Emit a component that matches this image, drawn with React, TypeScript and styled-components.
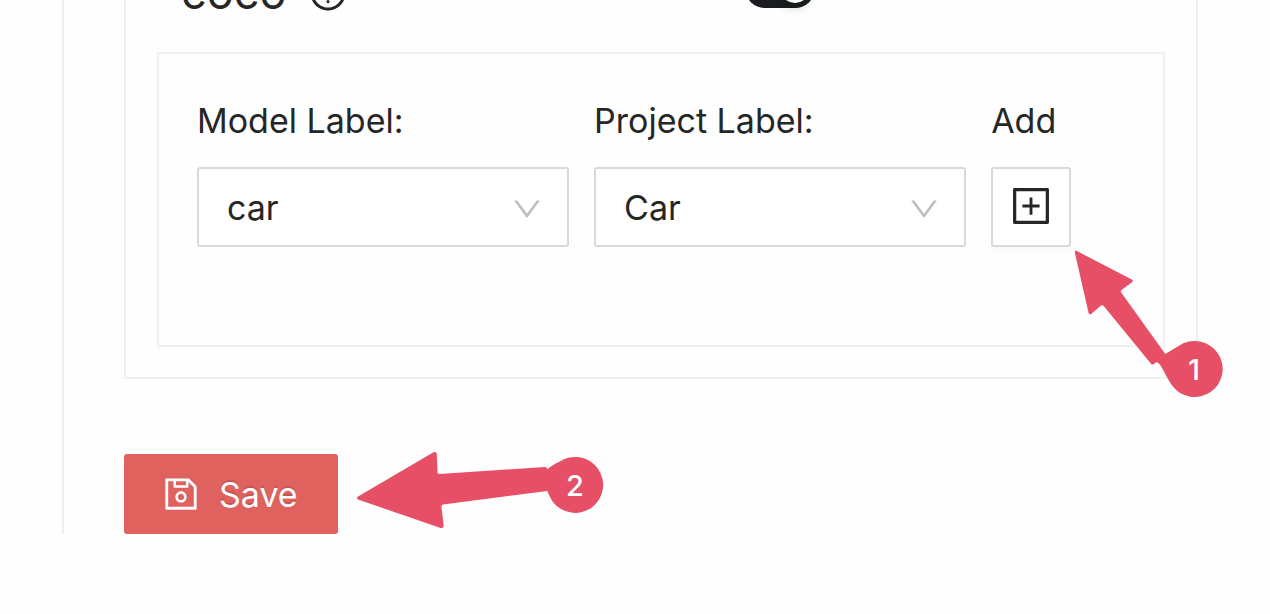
import React, { useState } from "react";
import styled, { createGlobalStyle } from "styled-components";
import {
  AiOutlineDown,
  AiOutlinePlusSquare,
  AiOutlineQuestionCircle,
  AiOutlineSave,
} from "react-icons/ai";

const color = {
  text: "#262626",
  line: "#f0f0f0",
  control: "#d9d9d9",
  chevron: "#bfbfbf",
  dark: "#1a1c1f",
  primary: "#df625f",
  marker: "#e64f66",
};

const GlobalStyle = createGlobalStyle`
  *, *::before, *::after { box-sizing: border-box; }
  body {
    margin: 0;
    background: #fefefe;
    color: ${color.text};
    font-family: Inter, "Liberation Sans", sans-serif;
    font-size: 34px;
  }
`;

const Page = styled.main`
  overflow: hidden;
  padding-left: 62px;
  padding-bottom: 80px;
`;

/* The form is scrolled so that its upper part is above the window. */
const Section = styled.form`
  margin-top: -124px;
  padding: 60px 72px 0 60px;
  border-left: 2px solid ${color.line};
`;

const ModelCard = styled.section`
  padding: 30px 31px;
  border: 2px solid ${color.line};
  border-radius: 2px;
`;

const ModelHeader = styled.header`
  display: grid;
  grid-template-columns: 47fr 33fr;
  align-items: start;
  padding: 0 24px;
  margin-bottom: 34px;
`;

const ModelName = styled.div`
  display: flex;
  align-items: center;
  gap: 22px;
  font-size: 45px;
  line-height: 50px;

  svg {
    width: 40px;
    height: 40px;
  }
`;

const Switch = styled.input`
  appearance: none;
  width: 70px;
  height: 40px;
  margin: 0;
  padding: 5px;
  border-radius: 20px;
  background: ${color.control};
  display: flex;
  justify-content: flex-start;
  cursor: pointer;

  &::after {
    content: "";
    width: 30px;
    height: 30px;
    border-radius: 50%;
    background: #fff;
    box-shadow: 0 5px 10px rgba(0, 35, 11, 0.2);
  }

  &:checked {
    background: ${color.dark};
    justify-content: flex-end;
  }
`;

const MappingBox = styled.div`
  display: grid;
  grid-template-columns: repeat(24, 1fr);
  column-gap: 25px;
  padding: 40px 38px 98px;
  border: 2px solid ${color.line};
`;

const Field = styled.div<{ $span: number }>`
  grid-column: span ${(p) => p.$span};
  display: flex;
  flex-direction: column;
  gap: 19px;
`;

const FieldLabel = styled.label`
  line-height: 54px;
  white-space: nowrap;
`;

const SelectWrap = styled.div`
  display: grid;
  align-items: center;

  > * {
    grid-area: 1 / 1;
  }

  svg {
    justify-self: end;
    width: 34px;
    height: 34px;
    margin-right: 25px;
    margin-top: 4px;
    color: ${color.chevron};
    pointer-events: none;
  }
`;

const SelectControl = styled.select`
  appearance: none;
  width: 100%;
  height: 80px;
  padding: 0 72px 0 28px;
  border: 2px solid ${color.control};
  border-radius: 3px;
  background: #fff;
  color: inherit;
  font: inherit;
`;

const Anchor = styled.div`
  position: relative;
  width: max-content;
`;

const AddButton = styled.button`
  display: flex;
  align-items: center;
  justify-content: center;
  width: 80px;
  height: 80px;
  padding: 0 0 2px;
  border: 2px solid ${color.control};
  border-radius: 3px;
  background: #fff;
  color: inherit;
  box-shadow: 0 5px 0 rgba(0, 0, 0, 0.015);
  cursor: pointer;

  svg {
    width: 46px;
    height: 46px;
  }
`;

const Actions = styled.div`
  margin-top: 75px;
`;

const SaveButton = styled.button`
  display: flex;
  align-items: center;
  gap: 18px;
  height: 80px;
  padding: 0 40px 0 37px;
  border: 0;
  border-radius: 3px;
  background: ${color.primary};
  color: #fff;
  font: inherit;
  text-shadow: 0 -2px 0 rgba(0, 0, 0, 0.12);
  cursor: pointer;

  svg {
    width: 40px;
    height: 40px;
  }
`;

const Marker = styled.svg<{ $top: string }>`
  position: absolute;
  left: 100%;
  top: ${(p) => p.$top};
  fill: ${color.marker};
  pointer-events: none;

  text {
    fill: #fff;
    font-size: 29px;
    font-weight: 500;
    text-anchor: middle;
  }
`;

function SelectField({ id, label, options }: { id: string; label: string; options: string[] }) {
  return (
    <Field $span={10}>
      <FieldLabel htmlFor={id}>{label}</FieldLabel>
      <SelectWrap>
        <SelectControl id={id}>
          {options.map((o) => (
            <option key={o}>{o}</option>
          ))}
        </SelectControl>
        <AiOutlineDown aria-hidden />
      </SelectWrap>
    </Field>
  );
}

export default function App() {
  const [enabled, setEnabled] = useState(true);

  return (
    <>
      <GlobalStyle />
      <Page>
        <Section onSubmit={(e) => e.preventDefault()}>
          <ModelCard>
            <ModelHeader>
              <ModelName>
                <label htmlFor="model-enabled">coco</label>
                <AiOutlineQuestionCircle aria-hidden />
              </ModelName>
              <Switch
                id="model-enabled"
                type="checkbox"
                role="switch"
                checked={enabled}
                onChange={(e) => setEnabled(e.target.checked)}
              />
            </ModelHeader>
            <MappingBox>
              <SelectField id="model-label" label="Model Label:" options={["car"]} />
              <SelectField id="project-label" label="Project Label:" options={["Car"]} />
              <Field $span={4}>
                <FieldLabel htmlFor="add-mapping">Add</FieldLabel>
                <Anchor>
                  <AddButton id="add-mapping" type="button">
                    <AiOutlinePlusSquare aria-hidden />
                  </AddButton>
                  <Marker $top="100%" width="160" height="160" viewBox="0 0 160 160">
                    <path d="M3.8 5.5Q3.6 3.2 6 4.1L60.8 32.6Q62.8 34 61 35.3L50.5 43Q49.3 44.2 50.2 45.6L94.3 107L108 98.8A28 28 0 1 1 101.1 138.6C96 131.5 93.5 124.5 89.7 118.7Q87.6 115.5 85.7 115L82.5 117.3Q81.3 118 80.2 116.9L32.5 58.8Q31.3 57.6 30 58.6L20.2 67Q18.2 68.2 17.6 66Z" />
                    <text x="123" y="133">1</text>
                  </Marker>
                </Anchor>
              </Field>
            </MappingBox>
          </ModelCard>
          <Actions>
            <Anchor>
              <SaveButton type="submit">
                <AiOutlineSave aria-hidden />
                Save
              </SaveButton>
              <Marker $top="-10px" width="270" height="100" viewBox="0 0 270 100">
                <path d="M19.6 52.7L95.5 8.3Q98.5 7 98.8 10L99.5 28.6Q99.7 30.2 101.3 30L207 22.9Q208.7 22.9 209.3 25.3C213.500 22.5 217 19.4 221.3 17.800A28 28 0 1 1 214.9 57.9C212.3 54 210.8 50.5 209.3 47L105 60.6Q103.2 61 103.4 62.8L105.7 81.5Q105.7 84.8 102.6 83.9L20 55.5Q18.2 54.3 19.6 52.7Z" />
                <text x="237" y="52">2</text>
              </Marker>
            </Anchor>
          </Actions>
        </Section>
      </Page>
    </>
  );
}
